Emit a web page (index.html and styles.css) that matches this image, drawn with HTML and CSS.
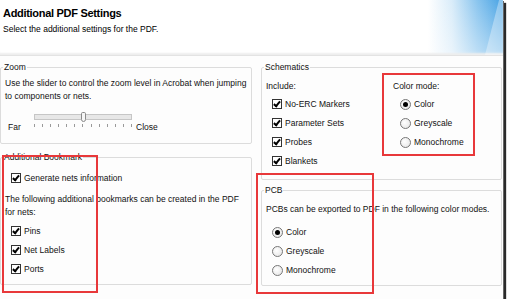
FILE: index.html
```html
<!DOCTYPE html>
<html lang="en">
<head>
    <meta charset="UTF-8">
    <title>Additional PDF Settings</title>
    <link rel="stylesheet" href="styles.css">
</head>
<body>
    <div class="window">
        <header class="head">
            <h1>Additional PDF Settings</h1>
            <p>Select the additional settings for the PDF.</p>
        </header>

        <div class="panes">
            <div class="col col-left">
                <fieldset class="group zoom">
                    <legend>Zoom</legend>
                    <p>Use the slider to control the zoom level in Acrobat when jumping to components or nets.</p>
                    <div class="slider-row">
                        <span class="far">Far</span>
                        <div class="slider">
                            <div class="track"></div>
                            <div class="ticks">
                                <i></i><i></i><i></i><i></i><i></i><i></i><i></i><i></i><i></i><i></i><i></i><i></i><i></i>
                            </div>
                            <span class="thumb"></span>
                        </div>
                        <span class="close">Close</span>
                    </div>
                </fieldset>

                <fieldset class="group bookmark">
                    <legend>Additional Bookmark</legend>
                    <label class="opt"><span class="cb"></span>Generate nets information</label>
                    <p class="note">The following additional bookmarks can be created in the PDF for nets:</p>
                    <div class="opts">
                        <label class="opt"><span class="cb"></span>Pins</label>
                        <label class="opt"><span class="cb"></span>Net Labels</label>
                        <label class="opt"><span class="cb"></span>Ports</label>
                    </div>
                </fieldset>
            </div>

            <div class="col col-right">
                <fieldset class="group schem">
                    <legend>Schematics</legend>
                    <div class="schem-body">
                        <div class="include">
                            <div class="caption">Include:</div>
                            <div class="opts">
                                <label class="opt"><span class="cb"></span>No-ERC Markers</label>
                                <label class="opt"><span class="cb"></span>Parameter Sets</label>
                                <label class="opt"><span class="cb"></span>Probes</label>
                                <label class="opt"><span class="cb"></span>Blankets</label>
                            </div>
                        </div>
                        <div class="colormode">
                            <div class="caption">Color mode:</div>
                            <div class="opts">
                                <label class="opt"><span class="rb on"></span>Color</label>
                                <label class="opt"><span class="rb"></span>Greyscale</label>
                                <label class="opt"><span class="rb"></span>Monochrome</label>
                            </div>
                        </div>
                    </div>
                </fieldset>

                <fieldset class="group pcb">
                    <legend>PCB</legend>
                    <p>PCBs can be exported to PDF in the following color modes.</p>
                    <div class="opts">
                        <label class="opt"><span class="rb on"></span>Color</label>
                        <label class="opt"><span class="rb"></span>Greyscale</label>
                        <label class="opt"><span class="rb"></span>Monochrome</label>
                    </div>
                </fieldset>
            </div>
        </div>

        <!-- red annotation boxes drawn over the dialog -->
        <div class="mark mark-bookmark"></div>
        <div class="mark mark-colormode"></div>
        <div class="mark mark-pcb"></div>
    </div>
</body>
</html>
```

FILE: styles.css
```css
body {
    margin: 0;
    background-color: #fff;
    font-family: 'Liberation Sans', Arial, sans-serif;
    font-size: 8.5px;
    line-height: 13px;
    color: #111;
}
p {
    margin: 0;
}
.window {
    position: relative;
    width: 503px;
    height: 299px;
    background-color: #fdfdfd;
    box-shadow: 1px 1px 0 #666, 3px 3px 1px #2a2a2a;
    overflow: hidden;
}
.head {
    position: relative;
    height: 56px;
    box-sizing: border-box;
    padding: 7px 3px 0;
    background:
        linear-gradient(to bottom, rgba(255,255,255,0) 0%, rgba(255,255,255,0.45) 100%),
        linear-gradient(to right, #fff 428px, #d9ecf9 452px, #88c4ee 478px, #4ea6e5 500px);
    border-bottom: 1px solid #e3e3e3;
    box-shadow: inset 0 -3px 2px -1px #eeeeee;
}
.head::after {
    content: "";
    position: absolute;
    top: 0;
    right: 0;
    width: 24px;
    height: 55px;
    background: rgba(255,255,255,0.35);
    clip-path: polygon(20px 0, 24px 0, 24px 100%, 6px 100%);
}
.head h1 {
    margin: 0;
    font-size: 11px;
    line-height: 13px;
    letter-spacing: -0.3px;
    color: #000;
}
.head p {
    margin-top: 3px;
    color: #000;
}
.panes {
    display: flex;
    gap: 9px;
}
.col {
    display: flex;
    flex-direction: column;
}
.col-left {
    width: 252px;
}
.col-right {
    width: 241px;
}
.group {
    margin: 0;
    padding: 0 4px;
    border: 1px solid #dcdcdc;
    border-radius: 2px;
    min-width: 0;
}
.group legend {
    padding: 0 1px;
    margin-left: -2px;
    line-height: 13px;
    color: #111;
}
.zoom {
    margin-top: 5px;
    padding-top: 3px;
    padding-bottom: 9px;
}
.slider-row {
    display: flex;
    align-items: flex-start;
    margin-top: 9px;
    padding-left: 3px;
}
.far {
    width: 26px;
    margin-top: 9px;
}
.close {
    margin-left: 4px;
    margin-top: 9px;
}
.slider {
    position: relative;
    width: 98px;
}
.track {
    height: 4px;
    margin-top: 2px;
    border: 1px solid #c6c6c6;
    background-color: #e7e7e7;
}
.ticks {
    display: flex;
    justify-content: space-between;
    margin-top: 4px;
}
.ticks i {
    width: 1px;
    height: 3px;
    background-color: #9a9a9a;
}
.thumb {
    position: absolute;
    top: 0;
    left: 47px;
    width: 3px;
    height: 8px;
    border: 1px solid #8a8a8a;
    border-radius: 2px 2px 3px 3px;
    background-color: #f6f6f6;
}
.opt {
    display: flex;
    align-items: center;
    height: 19px;
    padding-left: 6px;
}
.cb {
    position: relative;
    width: 8px;
    height: 8px;
    margin-right: 3px;
    margin-bottom: 1px;
    border: 1px solid #333;
    background-color: #fff;
    flex: none;
}
.cb::after {
    content: "";
    position: absolute;
    left: 2px;
    top: 0;
    width: 2px;
    height: 5px;
    border-right: 2px solid #000;
    border-bottom: 2px solid #000;
    transform: rotate(40deg);
}
.rb {
    display: grid;
    place-items: center;
    width: 9px;
    height: 9px;
    margin-right: 3px;
    border: 1px solid #777;
    border-radius: 50%;
    background: radial-gradient(circle at 40% 40%, #fff, #e2e2e2);
    flex: none;
}
.rb.on::after {
    content: "";
    width: 5px;
    height: 5px;
    border-radius: 50%;
    background-color: #000;
}
.bookmark {
    margin-top: 7px;
    padding-top: 5px;
    padding-bottom: 5px;
}
.bookmark .note {
    margin-top: 5px;
}
.bookmark .opts {
    margin-top: 3px;
}
.schem {
    margin-top: 5px;
    padding-top: 6px;
    padding-bottom: 8px;
}
.schem-body {
    display: flex;
}
.include {
    width: 127px;
}
.schem .opts {
    margin-top: 2px;
}
.colormode .opt {
    padding-left: 7px;
}
.pcb {
    margin-top: 4px;
    padding-top: 6px;
    padding-bottom: 5px;
}
.pcb .opts {
    margin-top: 7px;
}
.mark {
    position: absolute;
    border: 2px solid #e8383a;
    pointer-events: none;
}
.mark-bookmark {
    left: 2px;
    top: 155px;
    width: 92px;
    height: 134px;
}
.mark-colormode {
    left: 382px;
    top: 73px;
    width: 89px;
    height: 79px;
}
.mark-pcb {
    left: 256px;
    top: 173px;
    width: 114px;
    height: 117px;
}
```
